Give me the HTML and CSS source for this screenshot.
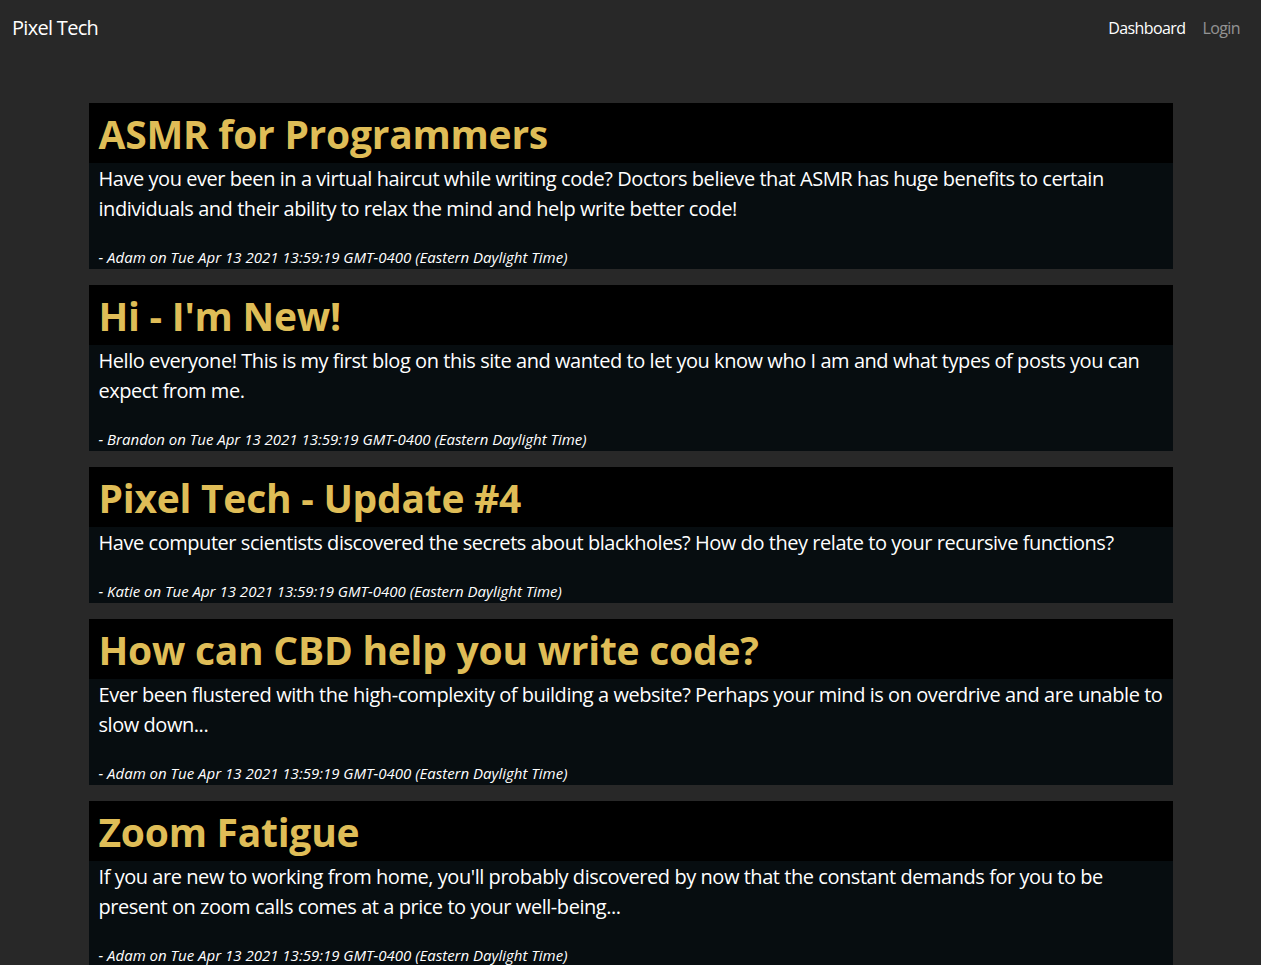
FILE: index.html
```html
<!DOCTYPE html>
<html lang="en">
<head>
<meta charset="utf-8">
<title>Pixel Tech</title>
<link rel="stylesheet" href="styles.css">
</head>
<body>
<header class="navbar">
  <a class="brand" href="#">Pixel Tech</a>
  <nav class="nav">
    <a class="nav-link active" href="#">Dashboard</a>
    <a class="nav-link" href="#">Login</a>
  </nav>
</header>
<main class="posts">
  <article class="post">
    <h2 class="post-title">ASMR for Programmers</h2>
    <div class="post-body">
      <p class="post-text">Have you ever been in a virtual haircut while writing code? Doctors believe that ASMR has huge benefits to certain individuals and their ability to relax the mind and help write better code!</p>
      <p class="post-meta">- Adam on Tue Apr 13 2021 13:59:19 GMT-0400 (Eastern Daylight Time)</p>
    </div>
  </article>
  <article class="post">
    <h2 class="post-title">Hi - I'm New!</h2>
    <div class="post-body">
      <p class="post-text">Hello everyone! This is my first blog on this site and wanted to let you know who I am and what types of posts you can expect from me.</p>
      <p class="post-meta">- Brandon on Tue Apr 13 2021 13:59:19 GMT-0400 (Eastern Daylight Time)</p>
    </div>
  </article>
  <article class="post">
    <h2 class="post-title">Pixel Tech - Update #4</h2>
    <div class="post-body">
      <p class="post-text">Have computer scientists discovered the secrets about blackholes? How do they relate to your recursive functions?</p>
      <p class="post-meta">- Katie on Tue Apr 13 2021 13:59:19 GMT-0400 (Eastern Daylight Time)</p>
    </div>
  </article>
  <article class="post">
    <h2 class="post-title">How can CBD help you write code?</h2>
    <div class="post-body">
      <p class="post-text">Ever been flustered with the high-complexity of building a website? Perhaps your mind is on overdrive and are unable to slow down...</p>
      <p class="post-meta">- Adam on Tue Apr 13 2021 13:59:19 GMT-0400 (Eastern Daylight Time)</p>
    </div>
  </article>
  <article class="post">
    <h2 class="post-title">Zoom Fatigue</h2>
    <div class="post-body">
      <p class="post-text">If you are new to working from home, you'll probably discovered by now that the constant demands for you to be present on zoom calls comes at a price to your well-being...</p>
      <p class="post-meta">- Adam on Tue Apr 13 2021 13:59:19 GMT-0400 (Eastern Daylight Time)</p>
    </div>
  </article>
</main>
</body>
</html>
```
FILE: styles.css
```css
* { box-sizing: border-box; }
html, body { margin: 0; padding: 0; }
body {
  background: #282828;
  color: #fff;
  font-family: "Open Sans", "Noto Sans", sans-serif;
}
a { text-decoration: none; }
.navbar {
  display: flex;
  justify-content: space-between;
  align-items: center;
  height: 56px;
  padding: 0 21px 0 12px;
}
.brand {
  color: #fff;
  font-size: 20px;
  line-height: 30px;
  letter-spacing: -0.7px;
}
.nav { display: flex; gap: 17px; }
.nav-link {
  color: rgba(255,255,255,0.5);
  font-size: 16px;
  line-height: 24px;
  letter-spacing: -0.6px;
}
.nav-link.active { color: #fff; }
.posts {
  width: 1084px;
  margin: 47px auto 40px;
  display: flex;
  flex-direction: column;
  gap: 16px;
}
.post { background: #070d10; }
.post-title {
  margin: 0;
  background: #000;
  color: #dfbd57;
  font-size: 39px;
  font-weight: 700;
  line-height: 58px;
  height: 60px;
  padding: 2px 10px 0;
  letter-spacing: -0.25px;
}
.post-body { padding: 0 4px 0 10px; }
.post-text {
  margin: 0;
  padding-top: 1px;
  font-size: 20px;
  line-height: 30px;
  letter-spacing: -0.45px;
}
.post-meta {
  margin: 21px 0 0;
  font-size: 15px;
  line-height: 24px;
  font-style: italic;
}
```
